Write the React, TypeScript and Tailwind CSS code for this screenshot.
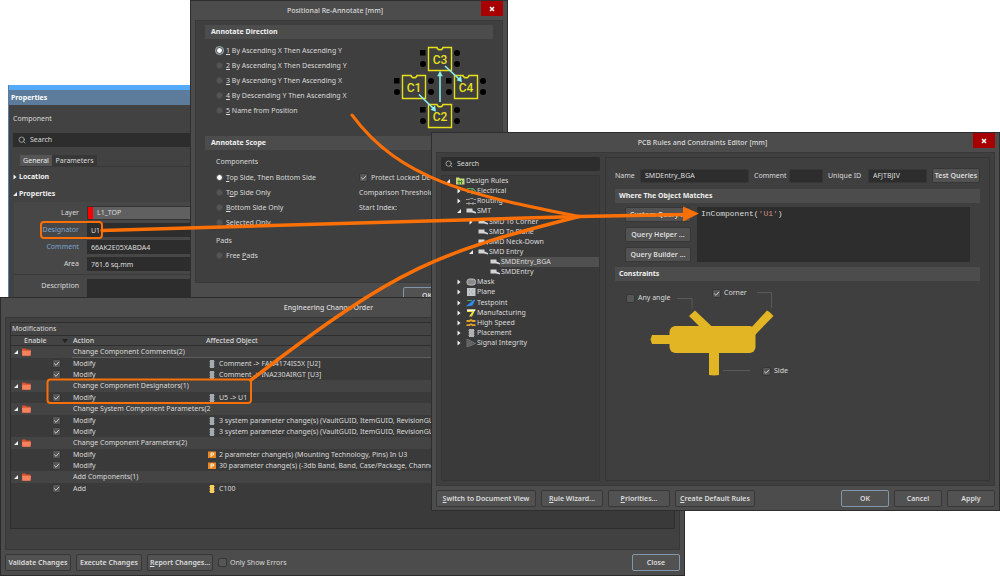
import { useState } from 'react';
import type { ReactNode } from 'react';
import { Search } from 'lucide-react';

type CheckProps = { id: string; label?: string; ariaLabel?: string; checked?: boolean };

function Check({ id, label, ariaLabel, checked = false }: CheckProps) {
  return (
    <span className="inline-flex items-center gap-[3px]">
      <span className="relative inline-flex">
        <input
          id={id}
          type="checkbox"
          aria-label={ariaLabel}
          defaultChecked={checked}
          className="peer size-[9px] appearance-none rounded-[2px] border border-[#363636] bg-[#565656]"
        />
        <svg viewBox="0 0 9 9" className="pointer-events-none absolute inset-0 hidden size-[9px] peer-checked:block">
          <path d="M2.200 4.500 4 6.300 7 2.800" fill="none" stroke="#ccc" strokeWidth="1" />
        </svg>
      </span>
      {label && <label htmlFor={id}>{label}</label>}
    </span>
  );
}

type RadioProps = { name: string; value: string; checked?: boolean; ring?: boolean; children: ReactNode };

function Radio({ name, value, checked = false, ring = false, children }: RadioProps) {
  return (
    <label className="flex h-[15px] items-center gap-[3px]">
      <input
        type="radio"
        name={name}
        value={value}
        defaultChecked={checked}
        className={`size-[7px] shrink-0 appearance-none rounded-full border border-[#484848] bg-[#555] checked:bg-white ${
          ring ? 'checked:outline checked:outline-[#a9b6c0]' : ''
        }`}
      />
      <span>{children}</span>
    </label>
  );
}

function Button({ children, className = '', primary = false }: { children: ReactNode; className?: string; primary?: boolean }) {
  return (
    <button
      type="button"
      className={`flex shrink-0 items-center justify-center rounded-[2px] border bg-[#525252] font-semibold whitespace-nowrap text-[#ddd] ${
        primary ? 'border-[#8298aa]' : 'border-[#373737]'
      } ${className}`}
    >
      {children}
    </button>
  );
}

function CloseButton() {
  return (
    <button type="button" aria-label="Close window" className="flex h-[15px] w-[22px] items-center justify-center bg-[#a80000]">
      <svg viewBox="0 0 6 6" className="size-[6px]">
        <path d="M1 1 5 5M5 1 1 5" stroke="#fff" strokeWidth="1.5" />
      </svg>
    </button>
  );
}

function SectionTitle({ children }: { children: ReactNode }) {
  return <h2 className="h-[14px] bg-[#4c4c4c] text-[7px] leading-[14px] font-bold text-[#f0f0f0]">{children}</h2>;
}

function TreeArrow({ open }: { open: boolean }) {
  return (
    <svg viewBox="0 0 6 6" className="size-[6px] shrink-0">
      <path d={open ? 'M5 1v4H1z' : 'M1.5 .5 4.5 3l-3 2.5z'} fill="#eee" />
    </svg>
  );
}

/* ---------- Properties panel ---------- */

function PropertiesPanel() {
  const field = 'h-[14px] min-w-0 flex-1 bg-[#2d2d2d] px-1 text-[#ddd] outline-none';
  return (
    <section className="absolute top-[85px] left-2 w-[260px] border-l border-[#5a7fa6] bg-[#424242] pb-2">
      <div className="h-[5px] bg-[#55a9fb]" />
      <h1 className="h-[15px] bg-[#5d7c9b] pl-[2px] leading-[15px] font-bold text-white">Properties</h1>
      <p className="mt-2 ml-1 leading-[12px]">Component</p>
      <div className="mt-2 ml-1 flex h-[14px] items-center gap-1 bg-[#2d2d2d] pl-[5px]">
        <Search className="size-2 text-[#ccc]" />
        <input aria-label="Search properties" placeholder="Search" className="flex-1 outline-none placeholder:text-[#d8d8d8]" />
      </div>
      <div className="mt-2 ml-[11px] flex h-3 border-b border-[#383838]">
        <button type="button" className="w-8 bg-[#555] text-[#eee]">General</button>
        <button type="button" className="w-[45px] bg-[#373737]">Parameters</button>
      </div>
      <h2 className="mt-1 ml-[3px] flex h-[12px] items-center gap-px font-bold text-[#eee]">
        <TreeArrow open={false} />
        Location
      </h2>
      <h2 className="mt-[5px] ml-[3px] flex h-[12px] items-center gap-px font-bold text-[#eee]">
        <TreeArrow open />
        Properties
      </h2>
      <div className="mt-[2px] ml-[5px] flex flex-col gap-[3px] rounded-tl-[3px] bg-[#474747] pt-1">
        <div className="flex items-center gap-2">
          <label htmlFor="layer" className="w-[65px] text-right">Layer</label>
          <div className="flex h-[14px] flex-1 items-center border border-[#333] bg-[#606060]">
            <span className="h-full w-[5px] bg-[#fb0000]" />
            <select id="layer" className="ml-1 flex-1 appearance-none text-[#ddd] outline-none">
              <option>L1_TOP</option>
            </select>
          </div>
        </div>
        <div className="flex items-center gap-2">
          <label htmlFor="designator" className="w-[65px] text-right text-[#7ba3d0]">Designator</label>
          <input id="designator" defaultValue="U1" className={field} />
        </div>
        <div className="flex items-center gap-2">
          <label htmlFor="comment" className="w-[65px] text-right text-[#7ba3d0]">Comment</label>
          <input id="comment" defaultValue="66AK2E05XABDA4" className={field} />
        </div>
        <div className="flex items-center gap-2">
          <label htmlFor="area" className="w-[65px] text-right">Area</label>
          <input id="area" defaultValue="761.6 sq.mm" className={field} />
        </div>
        <div className="flex gap-2 border-t border-[#3a3a3a] pt-1">
          <label htmlFor="description" className="w-[65px] text-right leading-[14px]">Description</label>
          <textarea id="description" rows={3} className="h-7 flex-1 resize-none bg-[#2d2d2d] px-1 outline-none" />
        </div>
      </div>
    </section>
  );
}

/* ---------- Positional Re-Annotate ---------- */

const chips = [
  { name: 'C3', x: 37, y: 3 },
  { name: 'C1', x: 11, y: 31 },
  { name: 'C4', x: 63, y: 31 },
  { name: 'C2', x: 37, y: 60 },
];

function ChipDiagram() {
  return (
    <svg viewBox="0 0 98 88" className="mt-px h-[88px] w-[98px]">
      {chips.map(({ name, x, y }) => (
        <g key={name} transform={`translate(${x} ${y})`}>
          <rect x="-8" y="3" width="5.5" height="5.5" />
          <circle cx="-5" cy="17" r="3" />
          <circle cx="29" cy="6" r="3" />
          <circle cx="29" cy="17" r="3" />
          <path d="M.5.5H9c.6 3 5.4 3 6 0h8.500v23H.5z" fill="#3f3f3f" stroke="#e6e01c" strokeWidth="1.4" />
          <text x="12" y="16.500" textAnchor="middle" fontSize="12" fill="#e6e01c" className="font-['Roboto',sans-serif] font-medium">
            {name}
          </text>
        </g>
      ))}
      <g stroke="#8deeee" strokeWidth="1.6" fill="#8deeee">
        <path d="M28 50.500 42 64M49 58V31M54 22l14 13" fill="none" />
        <path d="M44 66.500 41 65.500l2.500-2.500zM49 28.500l-1.500 3h3zM70 37l-3-1 2.500-2.500z" />
      </g>
    </svg>
  );
}

function AnnotateWindow() {
  return (
    <section className="absolute top-0 left-[190px] w-[318px] border border-[#2e2e2e] bg-[#4c4c4c] pb-3">
      <header className="flex h-[19px] items-start pr-1">
        <h1 className="flex-1 pr-[2px] text-center leading-[19px] font-medium">Positional Re-Annotate [mm]</h1>
        <CloseButton />
      </header>
      <div className="mx-1 border border-[#393939] bg-[#3f3f3f] px-[9px] pt-1 pb-[19px]">
        <SectionTitle><span className="pl-[6px]">Annotate Direction</span></SectionTitle>
        <div className="flex justify-between pt-1 pr-1 pl-[11px]">
          <div className="flex flex-col">
            <Radio name="direction" value="1" checked ring><u>1</u> By Ascending X Then Ascending Y</Radio>
            <Radio name="direction" value="2"><u>2</u> By Ascending X Then Descending Y</Radio>
            <Radio name="direction" value="3"><u>3</u> By Ascending Y Then Ascending X</Radio>
            <Radio name="direction" value="4"><u>4</u> By Descending Y Then Ascending X</Radio>
            <Radio name="direction" value="5"><u>5</u> Name from Position</Radio>
          </div>
          <ChipDiagram />
        </div>
        <div className="mt-1">
          <SectionTitle><span className="pl-[6px]">Annotate Scope</span></SectionTitle>
        </div>
        <div className="flex pt-[5px] pl-[11px]">
          <div className="w-[143px]">
            <h3 className="leading-[14px]">Components</h3>
            <div className="mt-px flex flex-col">
              <Radio name="scope" value="top-bottom" checked><u>T</u>op Side, Then Bottom Side</Radio>
              <Radio name="scope" value="top">T<u>o</u>p Side Only</Radio>
              <Radio name="scope" value="bottom"><u>B</u>ottom Side Only</Radio>
              <Radio name="scope" value="selected"><u>S</u>elected Only</Radio>
            </div>
            <h3 className="mt-1 leading-[14px]">Pads</h3>
            <Radio name="pads" value="free">Free <u>P</u>ads</Radio>
          </div>
          <div className="flex flex-col pt-[15px] whitespace-nowrap">
            <div className="flex h-[15px] items-center">
              <Check id="protect" label="Protect Locked Designators" checked />
            </div>
            <p className="h-[15px] leading-[15px]">Comparison Threshold</p>
            <p className="h-[15px] leading-[15px]">Start Index:</p>
          </div>
        </div>
      </div>
      <div className="mt-1 flex justify-end pr-14">
        <Button primary className="h-[17px] w-12">OK</Button>
      </div>
    </section>
  );
}

/* ---------- Engineering Change Order ---------- */

type Change = { action: string; icon: 'part' | 'param' | 'new'; object: string };

const groups: { title: string; changes: Change[] }[] = [
  {
    title: 'Change Component Comments(2)',
    changes: [
      { action: 'Modify', icon: 'part', object: 'Comment -> FAN4174IS5X [U2]' },
      { action: 'Modify', icon: 'part', object: 'Comment -> INA230AIRGT [U3]' },
    ],
  },
  {
    title: 'Change Component Designators(1)',
    changes: [{ action: 'Modify', icon: 'part', object: 'U5 -> U1' }],
  },
  {
    title: 'Change System Component Parameters(2',
    changes: [
      { action: 'Modify', icon: 'part', object: '3 system parameter change(s) (VaultGUID, ItemGUID, RevisionGU' },
      { action: 'Modify', icon: 'part', object: '3 system parameter change(s) (VaultGUID, ItemGUID, RevisionGU' },
    ],
  },
  {
    title: 'Change Component Parameters(2)',
    changes: [
      { action: 'Modify', icon: 'param', object: '2 parameter change(s) (Mounting Technology, Pins) In U3' },
      { action: 'Modify', icon: 'param', object: '30 parameter change(s) (-3db Band, Band, Case/Package, Channe' },
    ],
  },
  {
    title: 'Add Components(1)',
    changes: [{ action: 'Add', icon: 'new', object: 'C100' }],
  },
];

function ObjectIcon({ icon }: { icon: Change['icon'] }) {
  if (icon === 'param') {
    return (
      <svg viewBox="0 0 8 8" className="size-2 shrink-0">
        <rect y=".5" width="8" height="6.500" fill="#e8872a" />
        <path d="M3 6V2h2.500v2H3" fill="none" stroke="#fff0c8" strokeWidth="1" />
      </svg>
    );
  }
  const fill = icon === 'new' ? '#f6cf62' : '#a3abb0';
  return (
    <svg viewBox="0 0 8 8" className="size-2 shrink-0">
      <path d="M1 1.500h6M1 4h6M1 6.500h6" stroke={icon === 'new' ? '#c98d26' : '#6d747a'} strokeWidth="1" />
      <rect x="2" width="4" height="8" fill={fill} />
    </svg>
  );
}

function FolderIcon() {
  return (
    <svg viewBox="0 0 9 8" className="h-2 w-[9px] shrink-0">
      <path d="M0 .5h3.500l1 1h4v6H0z" fill="#d8502e" />
      <path d="M0 2.800h9l-.5 5H.3z" fill="#f5825e" />
    </svg>
  );
}

function ChangeOrderWindow() {
  return (
    <section className="absolute top-[297px] left-0 w-[685px] border border-[#2b2b2b] bg-[#4c4c4c] px-1 pb-1">
      <h1 className="h-[19px] pr-7 text-center leading-[19px] font-medium">Engineering Change Order</h1>
      <div className="border border-[#383838] bg-[#414141] px-1 pt-1 pb-5">
        <div className="min-h-[207px] border border-[#2e2e2e] bg-[#3a3a3a]">
          <p className="h-[12px] bg-[#444] pl-px leading-[12px]">Modifications</p>
          <table className="w-full table-fixed border-collapse text-left whitespace-nowrap">
            <colgroup>
              <col className="w-[61px]" />
              <col className="w-[134px]" />
              <col />
            </colgroup>
            <thead>
              <tr className="border-y border-[#2e2e2e] bg-[#444] leading-[9px]">
                <th className="p-0 font-medium">
                  <span className="flex items-center justify-between pr-1 pl-[13px]">
                    Enable
                    <svg viewBox="0 0 6 4" className="h-1 w-[6px]"><path d="M0 0h6L3 4z" fill="#222" /></svg>
                  </span>
                </th>
                <th className="p-0 pl-px font-medium">Action</th>
                <th className="p-0 font-medium">Affected Object</th>
              </tr>
            </thead>
            {groups.map((group, g) => (
              <tbody key={group.title}>
                <tr className="bg-[#444] leading-[12px]">
                  <td className="p-0">
                    <span className="flex h-[12px] items-center gap-[3px] pl-[2px]">
                      <TreeArrow open />
                      <FolderIcon />
                    </span>
                  </td>
                  <td colSpan={2} className={`p-0 pl-px ${g === 0 ? 'shadow-[inset_0_-1px_0_#5e5e5e]' : ''}`}>{group.title}</td>
                </tr>
                {group.changes.map((change, i) => (
                  <tr key={i} className="leading-[11px]">
                    <td className="p-0">
                      <span className="flex h-[11px] items-center justify-end pr-[11px]">
                        <Check id={`change-${g}-${i}`} ariaLabel={`Enable ${change.object}`} checked />
                      </span>
                    </td>
                    <td className="p-0 pl-px">{change.action}</td>
                    <td className="p-0">
                      <span className="flex h-[11px] items-center gap-[3px] pl-[2px]">
                        <ObjectIcon icon={change.icon} />
                        {change.object}
                      </span>
                    </td>
                  </tr>
                ))}
              </tbody>
            ))}
          </table>
        </div>
      </div>
      <footer className="mt-1 flex items-center gap-[5px]">
        <Button className="h-[17px] w-[66px]">Validate Changes</Button>
        <Button className="h-[17px] w-[66px]">Execute Changes</Button>
        <Button className="h-[17px] w-[66px]"><u>R</u>eport Changes...</Button>
        <Check id="only-errors" label="Only Show Errors" />
        <Button primary className="ml-auto h-[17px] w-12">Close</Button>
      </footer>
    </section>
  );
}

/* ---------- PCB Rules and Constraints Editor ---------- */

type Rule = { label: string; depth: number; icon: string; open?: boolean };

const rules: Rule[] = [
  { label: 'Design Rules', depth: 0, icon: 'root', open: true },
  { label: 'Electrical', depth: 1, icon: 'electrical', open: false },
  { label: 'Routing', depth: 1, icon: 'routing', open: false },
  { label: 'SMT', depth: 1, icon: 'smt', open: true },
  { label: 'SMD To Corner', depth: 2, icon: 'smt', open: false },
  { label: 'SMD To Plane', depth: 2, icon: 'smt' },
  { label: 'SMD Neck-Down', depth: 2, icon: 'smt' },
  { label: 'SMD Entry', depth: 2, icon: 'smt', open: true },
  { label: 'SMDEntry_BGA', depth: 3, icon: 'smt' },
  { label: 'SMDEntry', depth: 3, icon: 'smt' },
  { label: 'Mask', depth: 1, icon: 'mask', open: false },
  { label: 'Plane', depth: 1, icon: 'plane', open: false },
  { label: 'Testpoint', depth: 1, icon: 'testpoint', open: false },
  { label: 'Manufacturing', depth: 1, icon: 'manufacturing', open: false },
  { label: 'High Speed', depth: 1, icon: 'highspeed', open: false },
  { label: 'Placement', depth: 1, icon: 'placement', open: false },
  { label: 'Signal Integrity', depth: 1, icon: 'signal', open: false },
];

const indents = ['pl-[3px]', 'pl-[14px]', 'pl-[26px]', 'pl-[38px]'];

const ruleIcons: Record<string, ReactNode> = {
  root: (
    <>
      <path d="M1 .5h3l1 1h4.500v6H1z" fill="#c3d77a" />
      <path d="M2.500 4.500h5M4 3v4M6.500 3v4" stroke="#3c7a34" strokeWidth="1" />
    </>
  ),
  electrical: <path d="M1 1.500h6l3 3M1 5.500h4M6 1.500v6" fill="none" stroke="#5fa35f" strokeWidth="1.200" />,
  routing: <path d="M0 2.500h3l1.500-1H7l1 1h2M0 6.500h10M3 5v3M7 5v3" fill="none" stroke="#a09a94" strokeWidth="1" />,
  smt: <path d="M.5 1.500H6.500v2l3.500 1.500v1.500L6 5.500H.5z" fill="#d4d4d4" />,
  mask: <rect x="1" y="1" width="8.500" height="6" rx="2.500" fill="#8a8a8a" stroke="#bbb" strokeWidth="1" />,
  plane: (
    <>
      <rect x="1" width="8.500" height="8" fill="#c4c8ca" />
      <path d="M3 2h1M6.500 2h1M3 6h1M6.500 6h1M5 4h1" stroke="#8d9194" strokeWidth="1" />
    </>
  ),
  testpoint: (
    <>
      <path d="M2 6.500 8.500 1 6 6z" fill="#2f8df0" stroke="#2f8df0" strokeWidth="1.300" />
      <path d="M1 1.500h5" stroke="#4fa64f" strokeWidth="1" />
    </>
  ),
  manufacturing: (
    <>
      <path d="M1 .5h8.500L6 7.500H3L6 3H1z" fill="#e9dc45" />
      <path d="M1 .5h8.500L9 2H1z" fill="#f3f3e8" />
    </>
  ),
  highspeed: <path d="M.5 2h3l1-.8h1l1 .8h3M.5 6.200h3l1-.8h1l1 .8h3" fill="none" stroke="#e6a429" strokeWidth="1.800" />,
  placement: (
    <>
      <path d="M2 1.500h7M2 4h7M2 6.500h7" stroke="#777" strokeWidth="1" />
      <rect x="3" width="5" height="8" fill="#b0b0b0" />
    </>
  ),
  signal: <path d="M1 0v8l8.500-3.500zM3 2v4M5 3v3" fill="#555" stroke="#7c7c7c" strokeWidth=".8" />,
};

function RulesTree() {
  const [selected, setSelected] = useState('SMDEntry_BGA');
  return (
    <ul role="tree" className="flex min-h-[306px] flex-col border border-[#353535] bg-[#3a3a3a]">
      <li role="none">
        <ul role="group" className="flex h-[172px] flex-col justify-between">
          {rules.map(rule => (
            <li
              key={rule.label}
              role="treeitem"
              aria-selected={rule.label === selected}
              onClick={() => setSelected(rule.label)}
              className={`flex h-[10px] items-center ${indents[rule.depth]}`}
            >
              <span className="w-[10px]">{rule.open !== undefined && <TreeArrow open={rule.open} />}</span>
              <svg viewBox="0 0 10 8" className="h-2 w-[10px] shrink-0">{ruleIcons[rule.icon]}</svg>
              <span className={`flex-1 pl-px leading-[10px] ${rule.label === selected ? 'bg-[#505050]' : ''}`}>{rule.label}</span>
            </li>
          ))}
        </ul>
      </li>
    </ul>
  );
}

function QueryEditor() {
  const [query, setQuery] = useState("InComponent('U1')");
  const parts = query.split(/('[^']*')/);
  const text = "px-1 py-[2px] font-['Liberation_Mono',monospace] text-[8px] leading-[10px]";
  return (
    <div className="relative flex-1 bg-[#2d2d2d]">
      <pre aria-hidden="true" className={text}>
        {parts.map((part, i) => (
          <span key={i} className={part.startsWith("'") ? 'text-[#cf9488]' : 'text-[#dcdcdc]'}>{part}</span>
        ))}
      </pre>
      <textarea
        aria-label="Query"
        value={query}
        onChange={e => setQuery(e.target.value)}
        spellCheck={false}
        className={`absolute inset-0 size-full resize-none text-transparent caret-white outline-none ${text}`}
      />
    </div>
  );
}

function EntryConstraints() {
  return (
    <div className="relative h-[104px]">
      <svg viewBox="0 0 200 104" className="h-[104px] w-[200px]">
        <g fill="none" stroke="#5a5a5a">
          <path d="M62 17.500h15v10M142 11.500h14.500v16M108 89.500h27" />
        </g>
        <g fill="#e2b524">
          <rect x="54.500" y="45" width="86" height="27" rx="6" />
          <path d="M37 54h20v9H37l-1.500-4.500z" />
          <path d="M94 70h10v24l-5 .5-5-.5z" />
          <path d="M74 35l6-5.500L98.500 47H86z" />
          <path d="M134 49l18-19.500 2.500 1.500L158.500 35 140 54z" />
        </g>
      </svg>
      <div className="absolute top-[11px] left-[11px] leading-[12px]"><Check id="any-angle" label="Any angle" /></div>
      <div className="absolute top-[6px] left-[97px] leading-[12px]"><Check id="corner" label="Corner" checked /></div>
      <div className="absolute top-[84px] left-[147px] leading-[12px]"><Check id="side" label="Side" checked /></div>
    </div>
  );
}

function RulesEditorWindow() {
  const field = 'h-[14px] rounded-[2px] border border-[#363636] bg-[#2d2d2d] px-1 text-[#ddd] outline-none';
  return (
    <section className="absolute top-[132px] left-[431px] w-[569px] border border-[#2e2e2e] bg-[#4c4c4c] pb-[3px]">
      <header className="flex h-[19px] items-start pr-1">
        <h1 className="flex-1 text-center leading-[19px] font-medium">PCB Rules and Constraints Editor [mm]</h1>
        <CloseButton />
      </header>
      <div className="mx-1 flex gap-[5px] border border-[#383838] bg-[#3f3f3f] px-1 py-1">
        <div className="flex w-[159px] flex-col gap-1">
          <div className="flex h-[14px] items-center gap-1 rounded-[2px] bg-[#2d2d2d] pl-1">
            <Search className="size-2 text-[#ccc]" />
            <input aria-label="Search rules" placeholder="Search" className="flex-1 outline-none placeholder:text-[#d8d8d8]" />
          </div>
          <RulesTree />
        </div>
        <div className="flex-1 border border-[#353535] px-[9px]">
          <div className="mt-[10px] flex h-[15px] items-center">
            <label htmlFor="rule-name" className="w-[25px]">Name</label>
            <input id="rule-name" defaultValue="SMDEntry_BGA" className={`${field} w-0 flex-1`} />
            <label htmlFor="rule-comment" className="w-9 pl-[5px]">Comment</label>
            <input id="rule-comment" className={`${field} ml-1 w-[34px]`} />
            <label htmlFor="rule-id" className="w-[45px] pl-[5px]">Unique ID</label>
            <input id="rule-id" defaultValue="AFJTBJIV" className={`${field} w-[59px]`} />
            <Button className="ml-[5px] h-[15px] w-12">Test Queries</Button>
          </div>
          <div className="mt-[6px]">
            <SectionTitle><span className="pl-1">Where The Object Matches</span></SectionTitle>
          </div>
          <div className="mt-1 flex gap-[6px] px-[10px]">
            <div className="flex flex-col gap-[5px]">
              <Button className="h-[15px] w-[66px]">Custom Query ...</Button>
              <Button className="h-[15px] w-[66px]">Query Helper ...</Button>
              <Button className="h-[15px] w-[66px]">Query Builder ...</Button>
            </div>
            <QueryEditor />
          </div>
          <div className="mt-[5px]">
            <SectionTitle><span className="pl-1">Constraints</span></SectionTitle>
          </div>
          <EntryConstraints />
        </div>
      </div>
      <footer className="mt-1 flex gap-[5px] px-1">
        <Button className="h-[17px] w-[100px]"><u>S</u>witch to Document View</Button>
        <Button className="h-[17px] w-[62px]"><u>R</u>ule Wizard...</Button>
        <Button className="h-[17px] w-[62px]"><u>P</u>riorities...</Button>
        <Button className="h-[17px] w-[80px]"><u>C</u>reate Default Rules</Button>
        <Button primary className="ml-auto h-[17px] w-12">OK</Button>
        <Button className="h-[17px] w-12">Cancel</Button>
        <Button className="h-[17px] w-12">Apply</Button>
      </footer>
    </section>
  );
}

/* Callouts that connect the three sources to the rule query */
function Callouts() {
  return (
    <svg viewBox="0 0 1000 576" className="pointer-events-none absolute top-0 left-0 h-[576px] w-[1000px]">
      <g fill="none" stroke="#fb7006" strokeLinecap="round">
        <rect x="41" y="222" width="61" height="16" rx="3" strokeWidth="2" />
        <rect x="47.500" y="379.500" width="203.500" height="23.500" rx="3" strokeWidth="2" />
        <path d="M102 230.500 579 216.500 686 214.500" strokeWidth="3.500" />
        <path d="M352 115C400 180 470 195 579 216.500" strokeWidth="3" />
        <path d="M251 380C400 265 440 252 579 216.500" strokeWidth="3.500" />
      </g>
      <path d="M683 206.500 699 213.500 683 221.500z" fill="#fb7006" />
    </svg>
  );
}

export default function App() {
  return (
    <main className="relative min-h-screen w-full overflow-hidden bg-white font-['Noto_Sans',sans-serif] text-[7px] leading-[10px] text-[#dadada]">
      <PropertiesPanel />
      <AnnotateWindow />
      <ChangeOrderWindow />
      <RulesEditorWindow />
      <Callouts />
    </main>
  );
}
